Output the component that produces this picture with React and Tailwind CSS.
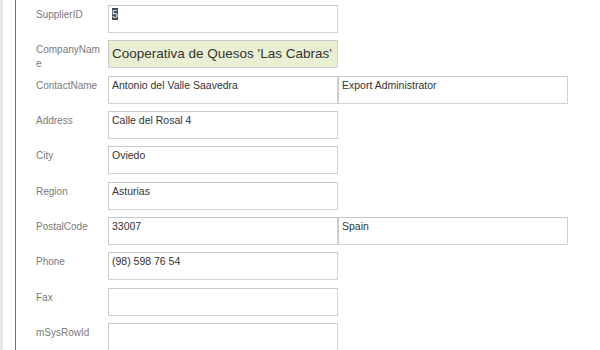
const rows = [
  { label: 'SupplierID', value: '5', selected: true },
  { label: 'CompanyName', value: "Cooperativa de Quesos 'Las Cabras'", big: true },
  { label: 'ContactName', value: 'Antonio del Valle Saavedra', extra: 'Export Administrator' },
  { label: 'Address', value: 'Calle del Rosal 4' },
  { label: 'City', value: 'Oviedo' },
  { label: 'Region', value: 'Asturias' },
  { label: 'PostalCode', value: '33007', extra: 'Spain' },
  { label: 'Phone', value: '(98) 598 76 54' },
  { label: 'Fax', value: '' },
  { label: 'mSysRowId', value: '' },
]

function Field({ children, big }) {
  return (
    <div
      className={`w-[230px] h-[28px] shrink-0 overflow-hidden whitespace-nowrap border border-[#d2d2d2] border-t-[#c8c8c8] border-l-[#c8c8c8] px-[3px] ${
        big
          ? 'bg-[#e8efd3] pt-[4px] text-[13.5px] leading-[17px] text-[#333]'
          : 'bg-white pt-[2px] text-[10.5px] leading-[13px] text-[#333]'
      }`}
    >
      {children}
    </div>
  )
}

export default function App() {
  return (
    <div className="flex w-[600px] h-[350px] overflow-hidden bg-white font-['Liberation_Sans',Arial,sans-serif]">
      <div className="w-[3px] bg-[#e6e6e6]" />
      <div className="w-[12px]" />
      <div className="w-[1px] bg-[#6f6f6f]" />
      <div className="flex flex-col pl-[20px] pt-[5px]">
        {rows.map((r) => (
          <div key={r.label} className="flex h-[35.33px] shrink-0">
            <div className="w-[72px] shrink-0 pt-[3px] pr-[6px] text-[10px] leading-[14px] text-[#7a7a7a] break-all">
              {r.label}
            </div>
            <Field big={r.big}>
              {r.selected ? (
                <span className="bg-[#4a4a4a] text-[#e8e8e8]">{r.value}</span>
              ) : (
                r.value
              )}
            </Field>
            {r.extra && <Field>{r.extra}</Field>}
          </div>
        ))}
      </div>
    </div>
  )
}
